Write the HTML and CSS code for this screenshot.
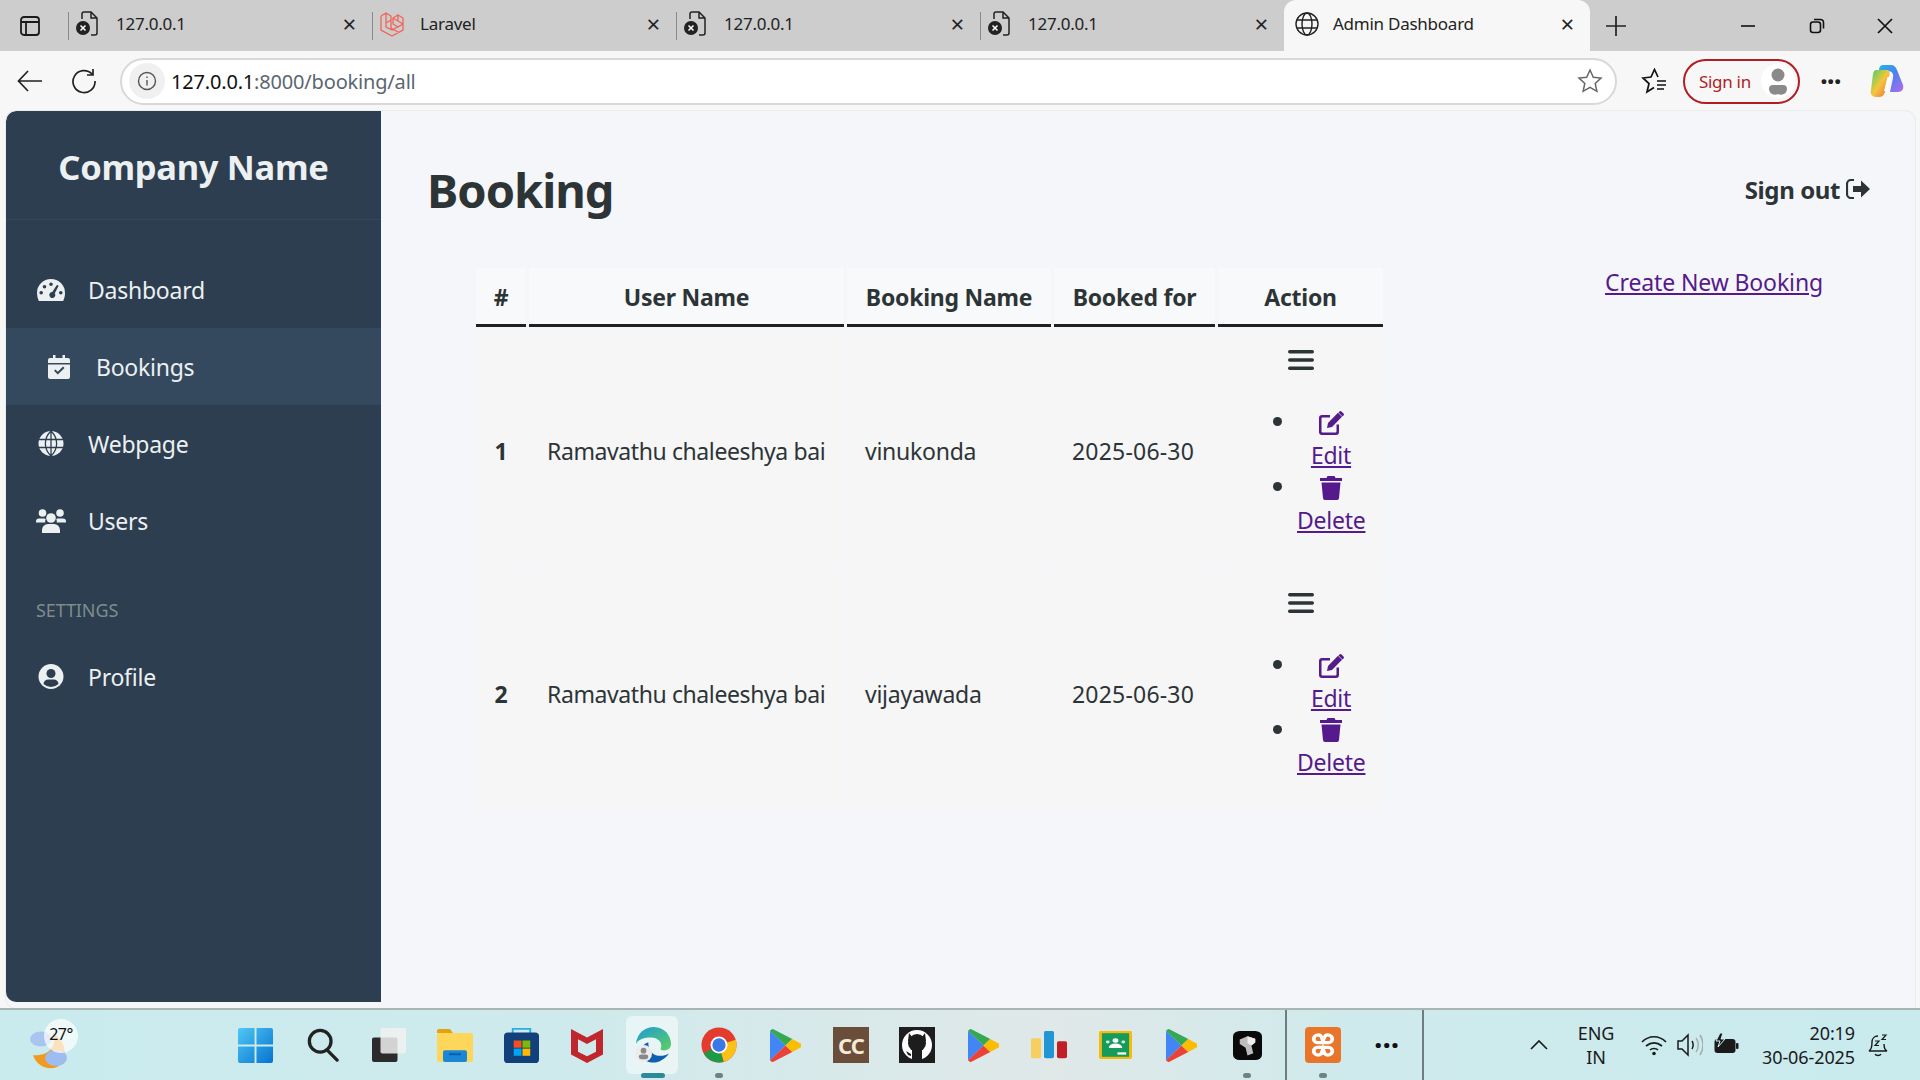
FILE: index.html
```html
<!DOCTYPE html>
<html>
<head>
    <title>Admin Dashboard</title>
    <link rel="stylesheet" href="styles.css">
</head>
<body>
<div class="screen">

    <!-- browser tabs -->
    <div class="tabstrip">
        <div class="tab-menu">
            <svg width="20" height="20" viewBox="0 0 20 20" fill="none" stroke="#1a1a1a" stroke-width="1.8"><rect x="1" y="1" width="18" height="18" rx="3"/><path d="M1 6h18M6 6v13"/></svg>
        </div>
        <div class="tab">
            <svg class="fav" width="24" height="26" viewBox="0 0 24 26" fill="none" stroke="#222" stroke-width="1.5"><path d="M7 8V3a2 2 0 0 1 2-2h7l6 6v15a2 2 0 0 1-2 2h-4M16 1v6h6"/><circle cx="8" cy="17" r="7" fill="#222" stroke="none"/><path d="M5.500 14.500l5 5M10.500 14.500l-5 5" stroke="#fff"/></svg>
            <span class="tab-title">127.0.0.1</span>
            <span class="tab-x">&times;</span>
        </div>
        <div class="tab">
            <svg class="fav fav-laravel" width="26" height="26" viewBox="0 0 26 26" fill="none" stroke="#f0655a" stroke-width="1.3"><path d="M1 5l5-3 5 3v12l8 4.500M1 5v14l11 6 11-6v-6M6 2v14l6 3M11 9l-5 3M12 19l11-6M18 4l5 3v6l-5-3zM18 4l-5 3v6l5 3 5-3M13 7l5 3"/></svg>
            <span class="tab-title">Laravel</span>
            <span class="tab-x">&times;</span>
        </div>
        <div class="tab">
            <svg class="fav" width="24" height="26" viewBox="0 0 24 26" fill="none" stroke="#222" stroke-width="1.5"><path d="M7 8V3a2 2 0 0 1 2-2h7l6 6v15a2 2 0 0 1-2 2h-4M16 1v6h6"/><circle cx="8" cy="17" r="7" fill="#222" stroke="none"/><path d="M5.500 14.500l5 5M10.500 14.500l-5 5" stroke="#fff"/></svg>
            <span class="tab-title">127.0.0.1</span>
            <span class="tab-x">&times;</span>
        </div>
        <div class="tab">
            <svg class="fav" width="24" height="26" viewBox="0 0 24 26" fill="none" stroke="#222" stroke-width="1.5"><path d="M7 8V3a2 2 0 0 1 2-2h7l6 6v15a2 2 0 0 1-2 2h-4M16 1v6h6"/><circle cx="8" cy="17" r="7" fill="#222" stroke="none"/><path d="M5.500 14.500l5 5M10.500 14.500l-5 5" stroke="#fff"/></svg>
            <span class="tab-title">127.0.0.1</span>
            <span class="tab-x">&times;</span>
        </div>
        <div class="tab tab-active">
            <svg class="fav" width="24" height="24" viewBox="0 0 24 24" fill="none" stroke="#222" stroke-width="1.4"><circle cx="12" cy="12" r="11"/><ellipse cx="12" cy="12" rx="5" ry="11"/><path d="M2 8h20M2 16h20"/></svg>
            <span class="tab-title">Admin Dashboard</span>
            <span class="tab-x">&times;</span>
        </div>
        <div class="tab-new">
            <svg width="22" height="22" viewBox="0 0 22 22" stroke="#222" stroke-width="1.7"><path d="M11 1v20M1 11h20"/></svg>
        </div>
        <div class="win-controls">
            <svg width="16" height="16" viewBox="0 0 16 16" stroke="#111" stroke-width="1.6"><path d="M1 8h14"/></svg>
            <svg width="16" height="16" viewBox="0 0 16 16" fill="none" stroke="#111" stroke-width="1.6"><rect x="1.500" y="4" width="10" height="10.500" rx="2.500"/><path d="M5 1.500h6a3 3 0 0 1 3.500 3v6"/></svg>
            <svg width="16" height="16" viewBox="0 0 16 16" stroke="#111" stroke-width="1.7"><path d="M1 1l14 14M15 1L1 15"/></svg>
        </div>
    </div>

    <!-- address bar -->
    <div class="toolbar">
        <svg class="tool-back" width="26" height="22" viewBox="0 0 26 22" fill="none" stroke="#222" stroke-width="1.7"><path d="M25 11H2M11 1L1.500 11 11 21"/></svg>
        <svg class="tool-reload" width="26" height="26" viewBox="0 0 26 26" fill="none" stroke="#222" stroke-width="1.7"><path d="M21 6a11 11 0 1 0 3 7M22 1v6h-6"/></svg>
        <div class="address">
            <span class="addr-info">
                <svg width="20" height="20" viewBox="0 0 20 20" fill="none" stroke="#555" stroke-width="1.400"><circle cx="10" cy="10" r="8.500"/><path d="M10 9v5.500M10 5.500v1.500"/></svg>
            </span>
            <span class="addr-url"><b>127.0.0.1</b>:8000/booking/all</span>
            <svg class="addr-star" width="26" height="26" viewBox="0 0 26 26" fill="none" stroke="#666" stroke-width="1.500"><path d="M13 2l3.300 7.300 7.700.8-5.800 5.300 1.700 7.900-6.900-4-6.900 4 1.700-7.900L2 10.100l7.700-.8z"/></svg>
        </div>
        <svg class="tool-favs" width="26" height="26" viewBox="0 0 26 26" fill="none" stroke="#111" stroke-width="1.700"><path d="M17 9l-3.500-7.500L10 9l-8 1 6 5.500L6 24l7-4.500M16 13h9M16 17h9M16 21h7"/></svg>
        <div class="signin">
            <span>Sign in</span>
            <span class="signin-avatar">
                <svg width="20" height="28" viewBox="0 0 20 28" fill="#8a8a8a"><circle cx="10" cy="8" r="6.500"/><path d="M1 22a4 4 0 0 1 4-4h10a4 4 0 0 1 4 4 6 6 0 0 1-9 5 6 6 0 0 1-9-5z"/></svg>
            </span>
        </div>
        <span class="tool-dots">&middot;&middot;&middot;</span>
        <svg class="tool-copilot" width="34" height="32" viewBox="0 0 34 32">
            <defs>
                <linearGradient id="cpA" x1="0" y1="0" x2="1" y2="1"><stop offset="0" stop-color="#1fb6e8"/><stop offset=".5" stop-color="#4f7ff0"/><stop offset="1" stop-color="#b46be8"/></linearGradient>
                <linearGradient id="cpB" x1="0" y1="0" x2="1" y2="1"><stop offset="0" stop-color="#3fcf6d"/><stop offset=".5" stop-color="#f5c63b"/><stop offset="1" stop-color="#f0683c"/></linearGradient>
            </defs>
            <path d="M12 0h9c3 0 5 2 6 5l6 15c1 4-1 7-5 7h-8l3-14c1-4-1-7-5-7H9c0-3 1-6 4-6z" fill="url(#cpA)"/>
            <path d="M6 5h11c2 0 3 2 2.500 4L15 27c-1 3-3 5-6 5H6c-4 0-6-3-5-7L3 9c.5-2 1.500-4 3-4z" fill="url(#cpB)"/>
            <path d="M17.500 12h3l-3.500 14h-3z" fill="#fff"/>
        </svg>
    </div>

    <!-- the page -->
    <div class="page">
        <aside class="sidebar">
            <div class="brand">Company Name</div>
            <nav class="menu">
                <a class="menu-item">
                    <svg class="menu-icon" width="28" height="22" viewBox="0 0 28 22"><path fill="#ecf0f1" fill-rule="evenodd" d="M14 0a14 14 0 0 1 14 14c0 3-.6 5.500-1.800 8H1.800A18 18 0 0 1 0 14 14 14 0 0 1 14 0zM14 3.500a1.800 1.800 0 1 0 0 3.600 1.800 1.800 0 0 0 0-3.600zM7.500 6a1.800 1.800 0 1 0 0 3.600 1.800 1.800 0 0 0 0-3.600zM4.200 12a1.800 1.800 0 1 0 0 3.600 1.800 1.800 0 0 0 0-3.600zM23.800 12a1.800 1.800 0 1 0 0 3.600 1.800 1.800 0 0 0 0-3.600zM19.500 6.500L15.300 13a3 3 0 1 0 2.500 1.300l3.500-6.700a1 1 0 0 0-1.800-1.100z"/></svg>
                    <span>Dashboard</span>
                </a>
                <a class="menu-item menu-active">
                    <svg class="menu-icon" width="22" height="24" viewBox="0 0 22 24"><path fill="#ecf0f1" fill-rule="evenodd" d="M5 0h2.500v3h7V0H17v3h3a2 2 0 0 1 2 2v3H0V5a2 2 0 0 1 2-2h3zM0 9.500h22V22a2 2 0 0 1-2 2H2a2 2 0 0 1-2-2zM16.500 13l-1.500-1.400-5.200 5.100-2.300-2.300L6 15.800l3.800 3.800z"/></svg>
                    <span>Bookings</span>
                </a>
                <a class="menu-item">
                    <svg class="menu-icon" width="25" height="25" viewBox="0 0 25 25"><circle cx="12.500" cy="12.500" r="12.500" fill="#ecf0f1"/><path d="M0 8.500h25M0 16.500h25M12.500 0v25M12.500 0C5 7 5 18 12.500 25M12.500 0C20 7 20 18 12.500 25" fill="none" stroke="#2c3e50" stroke-width="1.300"/></svg>
                    <span>Webpage</span>
                </a>
                <a class="menu-item">
                    <svg class="menu-icon" width="30" height="24" viewBox="0 0 30 24" fill="#ecf0f1"><circle cx="6.500" cy="4" r="3.800"/><circle cx="24" cy="4" r="3.800"/><circle cx="15" cy="9" r="4.800"/><path d="M0 12.500a3 3 0 0 1 3-3h5.500c.5 0 1 .2 1.200.5a6.500 6.500 0 0 0-.5 3.500H0zM30 12.500a3 3 0 0 0-3-3h-5.500c-.5 0-1 .2-1.200.5.400 1.100.6 2.300.5 3.500H30zM6 21a6 6 0 0 1 6-6h6a6 6 0 0 1 6 6v3H6z"/></svg>
                    <span>Users</span>
                </a>
                <div class="menu-label">SETTINGS</div>
                <a class="menu-item">
                    <svg class="menu-icon" width="25" height="25" viewBox="0 0 25 25"><circle cx="12.500" cy="12.500" r="12.500" fill="#ecf0f1"/><circle cx="12.500" cy="9.500" r="4.500" fill="#2c3e50"/><path d="M5 20a5 5 0 0 1 5-4.500h5a5 5 0 0 1 5 4.500 11 11 0 0 1-15 0z" fill="#2c3e50"/></svg>
                    <span>Profile</span>
                </a>
            </nav>
        </aside>

        <main class="main">
            <div class="main-head">
                <h1>Booking</h1>
                <a class="signout">Sign out
                    <svg width="24" height="20" viewBox="0 0 24 20" fill="#2d3436"><path d="M8 1H5a4 4 0 0 0-4 4v10a4 4 0 0 0 4 4h3" fill="none" stroke="#2d3436" stroke-width="2.200"/><path d="M15 1.500L24 10l-9 8.500V13H7V7h8z"/></svg>
                </a>
            </div>
            <div class="main-body">
                <table class="bookings">
                    <colgroup>
                        <col class="c-num"><col class="c-user"><col class="c-name"><col class="c-for"><col class="c-action">
                    </colgroup>
                    <thead>
                        <tr>
                            <th>#</th>
                            <th>User Name</th>
                            <th>Booking Name</th>
                            <th>Booked for</th>
                            <th>Action</th>
                        </tr>
                    </thead>
                    <tbody>
                        <tr>
                            <th class="row-num">1</th>
                            <td class="user-cell">Ramavathu chaleeshya bai</td>
                            <td>vinukonda</td>
                            <td class="date-cell">2025-06-30</td>
                            <td class="action-cell">
                                <div class="bars"><svg width="26" height="22" viewBox="0 0 26 22" fill="#2d3436"><rect y="1" width="26" height="3.500" rx="1.700"/><rect y="9.200" width="26" height="3.500" rx="1.700"/><rect y="17.500" width="26" height="3.500" rx="1.700"/></svg></div>
                                <ul class="actions">
                                    <li><a href="#"><svg class="act-icon" width="25" height="24" viewBox="0 0 25 24"><path fill="#551a8b" d="M11 4v2.500H3.500a1 1 0 0 0-1 1V20.500a1 1 0 0 0 1 1H16.500a1 1 0 0 0 1-1V13.500H20V21a3 3 0 0 1-3 3H3a3 3 0 0 1-3-3V7a3 3 0 0 1 3-3zM19 1.800l4 4L13 16l-5 1 1-5zM20.500.500a1.500 1.500 0 0 1 2 0l2 2a1.500 1.500 0 0 1 0 2l-1 1-4-4z"/></svg><br>Edit</a></li>
                                    <li><a href="#"><svg class="act-icon" width="22" height="24" viewBox="0 0 22 24"><path fill="#551a8b" d="M7.500 0h7l1 2H22v3H0V2h6.500zM1.500 6.500h19L19 22a2 2 0 0 1-2 2H5a2 2 0 0 1-2-2z"/></svg><br>Delete</a></li>
                                </ul>
                            </td>
                        </tr>
                        <tr>
                            <th class="row-num">2</th>
                            <td class="user-cell">Ramavathu chaleeshya bai</td>
                            <td>vijayawada</td>
                            <td class="date-cell">2025-06-30</td>
                            <td class="action-cell">
                                <div class="bars"><svg width="26" height="22" viewBox="0 0 26 22" fill="#2d3436"><rect y="1" width="26" height="3.500" rx="1.700"/><rect y="9.200" width="26" height="3.500" rx="1.700"/><rect y="17.500" width="26" height="3.500" rx="1.700"/></svg></div>
                                <ul class="actions">
                                    <li><a href="#"><svg class="act-icon" width="25" height="24" viewBox="0 0 25 24"><path fill="#551a8b" d="M11 4v2.500H3.500a1 1 0 0 0-1 1V20.500a1 1 0 0 0 1 1H16.500a1 1 0 0 0 1-1V13.500H20V21a3 3 0 0 1-3 3H3a3 3 0 0 1-3-3V7a3 3 0 0 1 3-3zM19 1.800l4 4L13 16l-5 1 1-5zM20.500.500a1.500 1.500 0 0 1 2 0l2 2a1.500 1.500 0 0 1 0 2l-1 1-4-4z"/></svg><br>Edit</a></li>
                                    <li><a href="#"><svg class="act-icon" width="22" height="24" viewBox="0 0 22 24"><path fill="#551a8b" d="M7.500 0h7l1 2H22v3H0V2h6.500zM1.500 6.500h19L19 22a2 2 0 0 1-2 2H5a2 2 0 0 1-2-2z"/></svg><br>Delete</a></li>
                                </ul>
                            </td>
                        </tr>
                    </tbody>
                </table>
                <a class="create-link" href="#">Create New Booking</a>
            </div>
        </main>
    </div>

    <!-- windows taskbar -->
    <div class="taskbar">
        <div class="weather">
            <svg width="46" height="52" viewBox="0 0 46 52"><path d="M24 14c4 10-2 24-20 22 3 10 14 16 24 12 10-5 12-24-4-34z" fill="#f39a1e"/><ellipse cx="12" cy="20" rx="11" ry="7.500" fill="#a9c4ef"/><ellipse cx="27" cy="39" rx="11" ry="8" fill="#9dbcf0"/></svg>
            <span class="weather-temp">27°</span>
        </div>
        <div class="task-icons">
            <div class="task-icon task-win">
                <svg width="35" height="35" viewBox="0 0 36 36"><defs><linearGradient id="winG" x1="0" y1="0" x2="1" y2="1"><stop offset="0" stop-color="#4fc8f5"/><stop offset="1" stop-color="#0673cf"/></linearGradient></defs><path d="M2 0h15v17H0V2a2 2 0 0 1 2-2zM19 0h15a2 2 0 0 1 2 2v15H19zM0 19h17v17H2a2 2 0 0 1-2-2zM19 19h17v15a2 2 0 0 1-2 2H19z" fill="url(#winG)"/></svg>
            </div>
            <div class="task-icon">
                <svg width="32" height="34" viewBox="0 0 34 36" fill="none" stroke="#222" stroke-width="3.500"><circle cx="14" cy="14" r="11.500"/><path d="M22 24l10 10" stroke-linecap="round"/></svg>
            </div>
            <div class="task-icon">
                <svg width="36" height="34" viewBox="0 0 36 36"><rect x="0" y="10" width="27" height="26" rx="2" fill="#2b2b2b"/><rect x="9" y="0" width="27" height="27" rx="2" fill="#f1f1f1" fill-opacity=".85"/></svg>
            </div>
            <div class="task-icon">
                <svg width="36" height="33" viewBox="0 0 36 34" preserveAspectRatio="none"><path d="M0 2a2 2 0 0 1 2-2h11l3 4H0z" fill="#e2a40c"/><rect y="4" width="36" height="30" rx="2" fill="#ffd65c"/><rect x="6" y="22" width="24" height="12" rx="2" fill="#1b86d6"/><rect x="12" y="25" width="12" height="2" fill="#0b5fa8"/></svg>
            </div>
            <div class="task-icon">
                <svg width="35" height="36" viewBox="0 0 36 40" preserveAspectRatio="none"><path d="M9 8V2h18v6" fill="none" stroke="#29aee6" stroke-width="2"/><rect y="6" width="36" height="34" rx="4" fill="#11407a"/><rect x="10" y="15" width="8" height="8" fill="#f25022"/><rect x="19" y="15" width="8" height="8" fill="#7fba00"/><rect x="10" y="24" width="8" height="8" fill="#00a4ef"/><rect x="19" y="24" width="8" height="8" fill="#ffb900"/></svg>
            </div>
            <div class="task-icon">
                <svg width="32" height="36" viewBox="0 0 32 38" preserveAspectRatio="none"><path d="M0 2l16 9 16-9v27L16 38 0 29zM7 13v13l9 5 9-5V13l-9 5z" fill="#c0272d" fill-rule="evenodd"/></svg>
            </div>
            <div class="task-icon task-open">
                <svg width="36" height="36" viewBox="0 0 38 38"><defs><linearGradient id="edgeG" x1="0" y1="0" x2="1" y2="1"><stop offset="0" stop-color="#1c9bd8"/><stop offset="1" stop-color="#5fd05f"/></linearGradient></defs><path d="M1 18C2 7 10 0 20 0c11 0 18 9 18 18 0 6-6 8-11 6 3-8-3-13-10-13-7 0-14 2-16 7z" fill="url(#edgeG)"/><path d="M14 16c-9 3-11 14-2 20 9 4 18 0 24-8-9 5-22 3-22-12z" fill="#0d5fb0"/><circle cx="9" cy="28" r="9" fill="#ececec"/><circle cx="9" cy="25" r="3" fill="#888"/><rect x="4" y="29" width="10" height="5" rx="2.500" fill="#888"/></svg>
            </div>
            <div class="task-icon task-dot">
                <svg width="36" height="36" viewBox="0 0 38 38"><circle cx="19" cy="19" r="18.500" fill="#e33b2e"/><path d="M19 19L3 28A18.500 18.500 0 0 0 24 36.800z" fill="#1d9a46"/><path d="M19 19l5 17.800A18.500 18.500 0 0 0 36.700 13.500z" fill="#fbc117"/><circle cx="19" cy="19" r="9" fill="#fff"/><circle cx="19" cy="19" r="7" fill="#3b78e7"/></svg>
            </div>
            <div class="task-icon">
                <svg width="31" height="33" viewBox="0 0 32 36" preserveAspectRatio="none"><path d="M0 2v32l16-16z" fill="#4285f4"/><path d="M0 2l16 16 7-7L3 0C2 0 1 1 0 2z" fill="#34a853"/><path d="M0 34l16-16 7 7L3 36c-1 0-2-1-3-2z" fill="#ea4335"/><path d="M23 11l9 5c1 1 1 3 0 4l-9 5-7-7z" fill="#fbbc04"/></svg>
            </div>
            <div class="task-icon">
                <div class="cc-box">CC</div>
            </div>
            <div class="task-icon">
                <svg width="36" height="36" viewBox="0 0 36 36"><rect width="36" height="36" fill="#1d1d1d"/><circle cx="18" cy="18" r="15" fill="#fff"/><circle cx="18" cy="16" r="9" fill="#1d1d1d"/><path d="M10 6l3 4h10l3-4 1 8H9zM13 22h10v11H13zM7 24l5 3v2l-3-1z" fill="#1d1d1d"/></svg>
            </div>
            <div class="task-icon">
                <svg width="31" height="33" viewBox="0 0 32 36" preserveAspectRatio="none"><path d="M0 2v32l16-16z" fill="#4285f4"/><path d="M0 2l16 16 7-7L3 0C2 0 1 1 0 2z" fill="#34a853"/><path d="M0 34l16-16 7 7L3 36c-1 0-2-1-3-2z" fill="#ea4335"/><path d="M23 11l9 5c1 1 1 3 0 4l-9 5-7-7z" fill="#fbbc04"/></svg>
            </div>
            <div class="task-icon">
                <svg width="36" height="28" viewBox="0 0 36 38" preserveAspectRatio="none"><rect x="0" y="10" width="10" height="27" rx="2" fill="#f6cf5f"/><rect x="13" y="0" width="10" height="37" rx="2" fill="#2196d3"/><rect x="26" y="14" width="10" height="23" rx="2" fill="#c11f25"/></svg>
            </div>
            <div class="task-icon">
                <svg width="33" height="28" viewBox="0 0 34 38" preserveAspectRatio="none"><rect width="34" height="38" rx="2" fill="#f8bb0c"/><rect x="3" y="3" width="28" height="32" fill="#169c5a"/><circle cx="17" cy="13" r="3" fill="#fff"/><circle cx="9" cy="15" r="2" fill="#cfe9db"/><circle cx="25" cy="15" r="2" fill="#cfe9db"/><path d="M10 23a7 6 0 0 1 14 0z" fill="#fff"/><rect x="19" y="29" width="9" height="3" fill="#fff"/></svg>
            </div>
            <div class="task-icon">
                <svg width="31" height="33" viewBox="0 0 32 36" preserveAspectRatio="none"><path d="M0 2v32l16-16z" fill="#4285f4"/><path d="M0 2l16 16 7-7L3 0C2 0 1 1 0 2z" fill="#34a853"/><path d="M0 34l16-16 7 7L3 36c-1 0-2-1-3-2z" fill="#ea4335"/><path d="M23 11l9 5c1 1 1 3 0 4l-9 5-7-7z" fill="#fbbc04"/></svg>
            </div>
            <div class="task-icon task-dot">
                <svg width="29" height="29" viewBox="0 0 30 38" preserveAspectRatio="none"><rect width="30" height="38" rx="7" fill="#0a0a0a"/><path d="M7 11l8-4 8 3v5l-4 4 2 10-6 3-2-10-6-5z" fill="#bdbdbd"/><path d="M15 7l8 3v5l-4 4-4-3z" fill="#eee"/></svg>
            </div>
        </div>
        <div class="task-pinned">
            <div class="task-icon task-dot">
                <div class="xampp"><svg width="26" height="28" viewBox="0 0 28 36" preserveAspectRatio="none" fill="none" stroke="#fff" stroke-width="4"><path d="M9 5c-6 0-7 9-1 10h12c6-1 5-10-1-10-4 0-4 5-5 8-1-3-1-8-5-8zM9 31c-6 0-7-9-1-10h12c6 1 5 10-1 10-4 0-4-5-5-8-1 3-1 8-5 8z"/></svg></div>
            </div>
            <span class="task-more">&middot;&middot;&middot;</span>
        </div>
        <div class="tray">
            <svg class="tray-up" width="18" height="10" viewBox="0 0 18 10" fill="none" stroke="#1a1a1a" stroke-width="1.700"><path d="M1 9l8-8 8 8"/></svg>
            <div class="tray-lang">ENG<br>IN</div>
            <svg width="26" height="22" viewBox="0 0 26 22" fill="none" stroke="#1a1a1a" stroke-width="1.700"><path d="M1 8c7-7 17-7 24 0M5 12c5-4 11-4 16 0M9 16c2-2 6-2 8 0"/><circle cx="13" cy="19.500" r="1.800" fill="#1a1a1a" stroke="none"/></svg>
            <svg width="26" height="24" viewBox="0 0 26 24" fill="none" stroke="#1a1a1a" stroke-width="1.500"><path d="M1 8h4l6-6v20l-6-6H1z"/><path d="M15 8c1.500 2 1.500 6 0 8"/><path d="M19 5c3 4 3 10 0 14M23 2c4 6 4 14 0 20" stroke="#aaa"/></svg>
            <svg width="26" height="24" viewBox="0 0 26 24"><rect x="1.500" y="6" width="21" height="14" rx="3" fill="#1a1a1a"/><rect x="23" y="10" width="2.500" height="6" rx="1" fill="#1a1a1a"/><path d="M7 0L3 8h4l-2 6 7-8H8l2-6z" fill="#1a1a1a" stroke="#c9ebee"/></svg>
            <div class="tray-clock">20:19<br>30-06-2025</div>
            <svg class="tray-bell" width="22" height="24" viewBox="0 0 22 24" fill="none" stroke="#1a1a1a" stroke-width="1.400"><path d="M10 3c-4 0-6 3-6 6 0 4-1 8-3 9h18c-2-1-3-4-3-7M7 21c1 2 5 2 6 0"/><path d="M7 8h4l-4 4.500h4M14 2h4l-4 4.500h4" stroke-width="1.200"/></svg>
        </div>
    </div>
</div>
</body>
</html>
```

FILE: styles.css
```css
* {
    box-sizing: border-box;
}

html,
body {
    margin: 0;
    height: 100%;
}

body {
    font-family: "Noto Sans", "Open Sans", sans-serif;
    color: #2d3436;
    overflow: hidden;
}

.screen {
    width: 1920px;
    height: 1080px;
    display: flex;
    flex-direction: column;
    background-color: #f7f7f7;
}

/* Browser tabs */

.tabstrip {
    height: 51px;
    display: flex;
    align-items: stretch;
    background-color: #cdcdcd;
}

.tab-menu {
    width: 68px;
    padding-left: 20px;
    display: flex;
    align-items: center;
}

.tab {
    width: 304px;
    padding: 0 16px 4px 6px;
    display: flex;
    align-items: center;
    position: relative;
    font-size: 17px;
    letter-spacing: -0.25px;
    color: #222;
}

.tab::before {
    content: "";
    position: absolute;
    left: 0;
    top: 12px;
    height: 28px;
    width: 1px;
    background-color: #8a8a8a;
}

.tab .fav {
    flex: none;
    width: 26px;
}

.tab .fav-laravel {
    margin-left: 2px;
}

.tab-title {
    flex: 1;
    margin-left: 16px;
}

.fav-laravel + .tab-title {
    margin-left: 14px;
}

.tab-x {
    font-size: 24px;
    line-height: 1;
    color: #222;
}

.tab-active {
    width: 306px;
    background-color: #f7f7f7;
    border-radius: 12px 12px 0 0;
    padding-left: 10px;
}

.tab-active .tab-title {
    margin-left: 13px;
}

.tab-active::before {
    display: none;
}

.tab-new {
    width: 52px;
    padding-left: 15px;
    display: flex;
    align-items: center;
}

.win-controls {
    margin-left: auto;
    width: 207px;
    padding: 0 27px 0 27px;
    display: flex;
    align-items: center;
    justify-content: space-between;
}

/* Address bar */

.toolbar {
    height: 60px;
    display: flex;
    align-items: center;
    padding-left: 17px;
}

.tool-reload {
    margin-left: 28px;
}

.address {
    width: 1497px;
    height: 47px;
    margin-left: 23px;
    padding-left: 7px;
    padding-right: 12px;
    display: flex;
    align-items: center;
    background-color: #fff;
    border: 2px solid #d8d8d8;
    border-radius: 24px;
}

.addr-info {
    width: 36px;
    height: 36px;
    border-radius: 50%;
    background-color: #f0f0f0;
    display: flex;
    align-items: center;
    justify-content: center;
}

.addr-url {
    flex: 1;
    margin-left: 6px;
    font-size: 20px;
    letter-spacing: -0.18px;
    color: #5b6670;
}

.addr-url b {
    font-weight: 400;
    color: #111;
}

.tool-favs {
    margin-left: 24px;
}

.signin {
    width: 117px;
    height: 45px;
    margin-left: 16px;
    padding: 0 3px 0 14px;
    display: flex;
    align-items: center;
    justify-content: space-between;
    border: 2px solid #b01e23;
    border-radius: 23px;
    font-size: 17px;
    letter-spacing: -0.3px;
    color: #b01e23;
}

.signin-avatar {
    width: 34px;
    height: 34px;
    border-radius: 50%;
    background-color: #fff;
    display: flex;
    align-items: center;
    justify-content: center;
}

.tool-dots {
    margin-left: 20px;
    font-size: 28px;
    font-weight: 700;
    line-height: 1;
    letter-spacing: -1px;
    color: #222;
}

.tool-copilot {
    margin-left: 29px;
}

/* Page */

.page {
    height: 897px;
    margin: 0 5px 0 6px;
    display: flex;
    background-color: #f5f6fa;
    border-radius: 10px 10px 0 10px;
    box-shadow: 0 0 0 1px #ececec;
    overflow: hidden;
}

.sidebar {
    width: 375px;
    height: 891px;
    background-color: #2c3e50;
    color: #ecf0f1;
    border-radius: 10px 0 0 10px;
    flex: none;
}

.brand {
    height: 109px;
    padding-top: 33px;
    text-align: center;
    font-size: 34.5px;
    line-height: 46px;
    font-weight: 700;
    letter-spacing: -0.3px;
    border-bottom: 1px solid rgba(255, 255, 255, 0.05);
}

.menu {
    padding-top: 31px;
}

.menu-item {
    height: 77px;
    padding-left: 30px;
    display: flex;
    align-items: center;
    font-size: 23px;
    letter-spacing: -0.25px;
}

.menu-icon {
    flex: none;
    width: 30px;
    margin-right: 22px;
}

.menu-active {
    background-color: #34495e;
    padding-left: 38px;
}

.menu-label {
    padding: 39px 0 0 30px;
    height: 79px;
    font-size: 18px;
    letter-spacing: -0.1px;
    color: #7f8c8d;
}

.main {
    flex: 1;
    padding: 48px 45px 0 46px;
}

.main-head {
    display: flex;
    align-items: center;
    justify-content: space-between;
    height: 62px;
}

h1 {
    margin: 0;
    font-size: 47px;
    font-weight: 700;
    letter-spacing: -1px;
}

.signout {
    display: flex;
    align-items: center;
    gap: 6px;
    margin-bottom: 2px;
    font-size: 24px;
    font-weight: 700;
    letter-spacing: -0.4px;
    white-space: nowrap;
}

.main-body {
    margin-top: 44px;
    display: flex;
    align-items: flex-start;
    justify-content: space-between;
}

/* Bookings table */

.bookings {
    margin-left: 46px;
    width: 913px;
    table-layout: fixed;
    border-collapse: separate;
    border-spacing: 3px;
    font-size: 23px;
    letter-spacing: -0.25px;
}

.c-num {
    width: 50px;
}

.c-user {
    width: 315px;
}

.c-name {
    width: 204px;
}

.c-for {
    width: 161px;
}

.c-action {
    width: 165px;
}

.bookings thead th {
    height: 59px;
    padding-top: 2px;
    background-color: #f8f9fa;
    border-bottom: 3px solid #212121;
    font-weight: 700;
    white-space: nowrap;
}

.bookings tbody th,
.bookings tbody td {
    padding: 19px 18px 17px;
    background-color: #f6f6f7;
    font-weight: 400;
    white-space: nowrap;
}

.bookings tbody .user-cell {
    letter-spacing: -0.4px;
}

.bookings tbody .date-cell {
    letter-spacing: 0.2px;
}

.bookings tbody .row-num {
    padding: 2px 0 0;
    font-weight: 700;
}

.bookings tbody .action-cell {
    padding: 16px 18px 18px;
}

.bars {
    height: 24px;
    text-align: center;
}

.actions {
    margin: 36px 0 16px;
    padding: 0 0 0 61px;
    line-height: 32px;
    white-space: nowrap;
    list-style: none;
}

.actions li {
    position: relative;
    text-align: center;
}

/* the bullet of the reference is bigger than a default disc */
.actions li::before {
    content: "";
    position: absolute;
    left: -24px;
    top: 11px;
    width: 9px;
    height: 9px;
    border-radius: 50%;
    background-color: #2d3436;
}

.actions a,
.create-link {
    color: #551a8b;
}

.act-icon {
    vertical-align: middle;
    margin-bottom: 4px;
}

.create-link {
    margin: 0 47px 0 0;
    padding-top: 1px;
    font-size: 23px;
    letter-spacing: -0.12px;
    white-space: nowrap;
}

/* Taskbar */

.taskbar {
    height: 72px;
    display: flex;
    align-items: center;
    background: linear-gradient(90deg, #c9ebee 0%, #cfeaec 30%, #e0e8e8 55%, #cfeaec 70%, #c9ebee 100%);
    border-top: 2px solid #a9b5b5;
}

.weather {
    width: 224px;
    padding-left: 29px;
    position: relative;
    display: flex;
    align-items: center;
}

.weather-temp {
    position: absolute;
    left: 44px;
    top: 0;
    width: 34px;
    height: 34px;
    border-radius: 50%;
    background-color: rgba(255, 255, 255, 0.7);
    font-size: 16px;
    line-height: 30px;
    letter-spacing: -0.5px;
    text-align: center;
    color: #111;
}

.task-icons {
    display: flex;
    width: 1061px;
}

.task-icon {
    width: 66px;
    height: 66px;
    flex: none;
    display: flex;
    align-items: center;
    justify-content: center;
    position: relative;
}

.task-win {
    padding-right: 4px;
}

.task-open::before {
    content: "";
    position: absolute;
    left: 6px;
    top: 4px;
    width: 52px;
    height: 58px;
    background-color: rgba(255, 255, 255, 0.5);
    border-radius: 6px;
}

.task-open svg {
    position: relative;
}

.task-open::after,
.task-dot::after {
    content: "";
    position: absolute;
    left: 50%;
    bottom: 0;
    transform: translateX(-50%);
    width: 8px;
    height: 5px;
    border-radius: 3px;
    background-color: #6d8288;
}

.task-open::after {
    width: 24px;
    background-color: #2a8a9a;
}

.cc-box {
    width: 36px;
    height: 36px;
    background-color: #6b4e39;
    color: #f3ead8;
    font-size: 22px;
    font-weight: 700;
    line-height: 36px;
    letter-spacing: -1px;
    text-align: center;
}

.task-pinned {
    width: 139px;
    height: 70px;
    display: flex;
    align-items: center;
    border-left: 2px solid #6f7d80;
    border-right: 2px solid #6f7d80;
    padding-left: 3px;
}

.xampp {
    width: 36px;
    height: 36px;
    background-color: #e9752a;
    border-radius: 4px;
    display: flex;
    align-items: center;
    justify-content: center;
}

.task-more {
    margin-left: 18px;
    font-size: 30px;
    font-weight: 700;
    line-height: 1;
    letter-spacing: 0;
    color: #111;
}

.tray {
    flex: 1;
    display: flex;
    align-items: center;
    padding-left: 106px;
    gap: 10px;
    font-size: 18px;
    letter-spacing: -0.1px;
    color: #1a1a1a;
}

.tray-up {
    margin-right: 18px;
}

.tray-lang {
    width: 40px;
    margin-right: 15px;
    text-align: center;
    line-height: 24px;
}

.tray-clock {
    margin-left: 10px;
    width: 96px;
    text-align: right;
    line-height: 24px;
    white-space: nowrap;
}

.tray-bell {
    margin-left: 3px;
}
```
